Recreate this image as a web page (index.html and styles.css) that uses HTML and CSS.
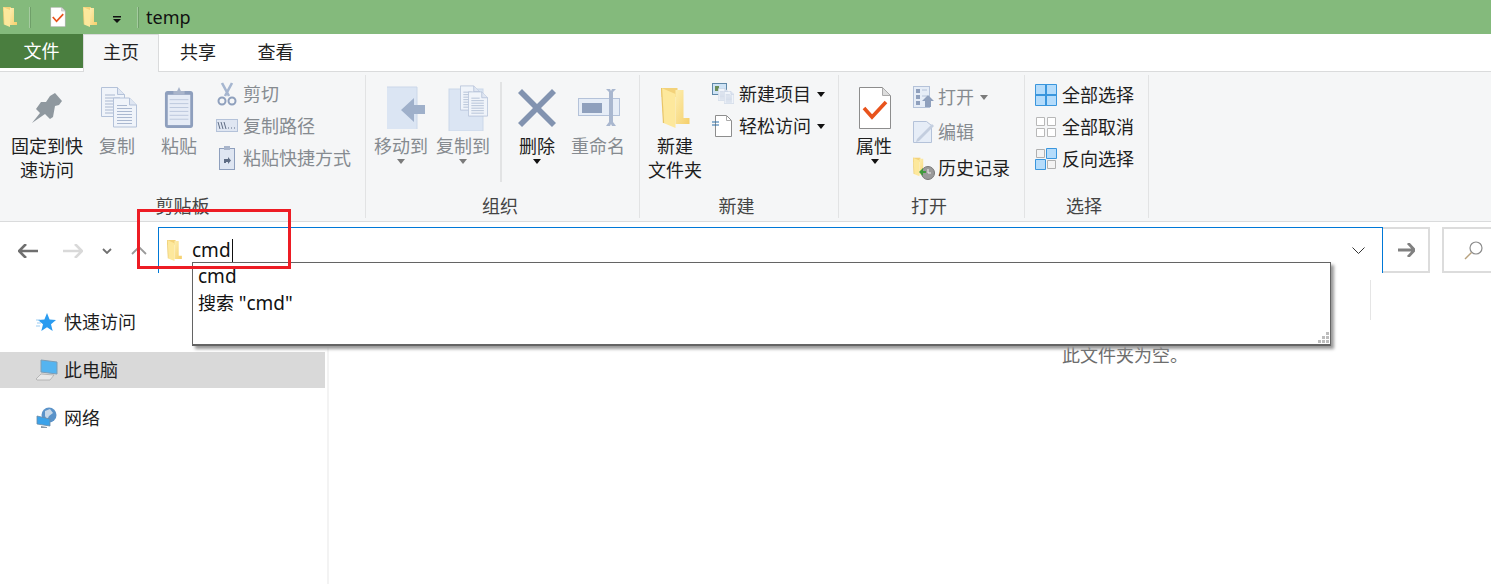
FILE: index.html
```html
<!DOCTYPE html>
<html lang="zh-CN">
<head>
<meta charset="utf-8">
<title>temp</title>
<link rel="stylesheet" href="styles.css">
</head>
<body>
<svg class="defs" width="0" height="0" aria-hidden="true">
  <defs>
    <linearGradient id="fold" x1="0" y1="0" x2="1" y2="1">
      <stop offset="0" stop-color="#fdeeb0"/><stop offset="1" stop-color="#f5cf6b"/>
    </linearGradient>
    <symbol id="folder" viewBox="0 0 14 20">
      <path d="M0 0h8v4.500h-8z" fill="#f3d27a"/>
      <path d="M7 1h4v14h3v3H7z" fill="url(#fold)"/>
      <path d="M0 0l7 3v17l-6-2.500z" fill="#fde89c"/>
      <path d="M0 0l1 17.500" stroke="#e8c568" stroke-width=".6"/>
    </symbol>
    <symbol id="checkdoc" viewBox="0 0 32 42">
      <path d="M.5.500h23l8 8v33H.500z" fill="#fff" stroke="#8d8d8d"/>
      <path d="M23.500.500v8h8z" fill="#ddd" stroke="#aaa"/>
      <path d="M5 21l8 9L27 15" fill="none" stroke="#e8531c" stroke-width="3.600"/>
    </symbol>
    <symbol id="page" viewBox="0 0 24 30">
      <path d="M.5.500h16l7 7v22H.5z" fill="#f0f4fa" stroke="#b4c2d9"/>
      <path d="M16.500.500v7h7" fill="#dfe6f2" stroke="#b4c2d9"/>
      <path d="M4 8h10M4 11h15M4 14h15M4 17h15M4 20h15M4 23h15M4 26h15" stroke="#aab8d0"/>
    </symbol>
  </defs>
</svg>

<div class="app">
  <header class="title">
    <svg class="t-folder1"><use href="#folder"/></svg>
    <i class="t-sep t-sep1"></i>
    <svg class="t-check"><use href="#checkdoc"/></svg>
    <svg class="t-folder2"><use href="#folder"/></svg>
    <svg class="t-caret" viewBox="0 0 10 8"><path d="M1 0h8v1.500H1z M1 3h8L5 7z" fill="#111"/></svg>
    <i class="t-sep t-sep2"></i>
    <span class="t-name">temp</span>
  </header>

  <nav class="tabs">
    <span class="tab tab-file">文件</span>
    <span class="tab tab-on">主页</span>
    <span class="tab tab-share">共享</span>
    <span class="tab tab-view">查看</span>
  </nav>

  <section class="ribbon">
    <div class="group g-clip">
      <div class="g-body">
        <div class="big w-pin">
          <span class="ico">
            <svg width="30" height="30" viewBox="0 0 30 30"><path d="M18 3L23 0l7 8-3 4-4 1-2 11-3 2-5-5L0 30l8-10-4-4 5-7h5z" fill="#8f989f"/></svg>
          </span>
          <span class="lbl">固定到快<br>速访问</span>
        </div>
        <div class="big w-copy off">
          <span class="ico ico-r2">
            <svg width="36" height="43" viewBox="0 0 36 43"><use href="#page" x="0" y="0" width="24" height="32"/><use href="#page" x="12" y="10" width="24" height="33"/></svg>
          </span>
          <span class="lbl">复制</span>
        </div>
        <div class="big w-paste off">
          <span class="ico">
            <svg width="30" height="43" viewBox="0 0 32 44" preserveAspectRatio="none"><rect x="1" y="5" width="30" height="38" rx="3" fill="#8e9fbd"/><rect x="4" y="9" width="24" height="31" fill="#e6ecf6"/><path d="M6 14h20M6 18h20M6 22h20M6 26h20M6 30h20M6 34h20" stroke="#bcc8dc"/><path d="M10 9V5h4l2-4 2 4h4v4z" fill="#a9b5cb"/></svg>
          </span>
          <span class="lbl">粘贴</span>
        </div>
        <div class="smalls s-clip off">
          <div class="row">
            <svg class="s-ico" width="22" height="24" viewBox="0 0 22 24"><path d="M6 1l7 13M16 1L9 14" stroke="#a6b6d0" stroke-width="2.600" fill="none"/><circle cx="6" cy="19" r="3.500" fill="none" stroke="#8fa0bd" stroke-width="2"/><circle cx="16" cy="19" r="3.500" fill="none" stroke="#8fa0bd" stroke-width="2"/></svg>
            <span>剪切</span>
          </div>
          <div class="row">
            <svg class="s-ico" width="22" height="14" viewBox="0 0 22 14"><rect x=".5" y=".5" width="21" height="12" fill="#dfe6f2" stroke="#b4c2d9"/><path d="M2 3l2 7M5 3l2 7M8 3l2 7" stroke="#5f6d85"/><path d="M12 9h1M15 9h1M18 9h1" stroke="#5f6d85"/></svg>
            <span>复制路径</span>
          </div>
          <div class="row">
            <svg class="s-ico s-narrow" width="16" height="24" viewBox="0 0 16 24"><rect x=".5" y="2.500" width="15" height="21" fill="#dfe6f2" stroke="#8e9fbd"/><rect x="5" y="0" width="6" height="4" fill="#a9b5cb"/><path d="M5 17v-4h4v-2l3 3.500-3 3.500v-2H7v1z" fill="#5f6d85"/></svg>
            <span>粘贴快捷方式</span>
          </div>
        </div>
      </div>
      <div class="g-name">剪贴板</div>
    </div>

    <div class="group g-org">
      <div class="g-body">
        <div class="big w-move off">
          <span class="ico ico-r8">
            <svg width="40" height="44" viewBox="0 0 40 44"><rect x="1" y="1" width="30" height="42" fill="#dbe5f3"/><path d="M1 1h30v42" fill="none" stroke="#cbd7e9"/><path d="M28 19v-7L15 24l13 12v-8h11v-9z" fill="#9fb0ca"/></svg>
          </span>
          <span class="lbl">移动到</span>
          <i class="caret gray"></i>
        </div>
        <div class="big w-move off">
          <span class="ico ico-r8">
            <svg width="40" height="46" viewBox="0 0 40 46"><rect x="1" y="4" width="34" height="42" fill="#dbe5f3" stroke="#cbd7e9"/><use href="#page" x="12" y="0" width="20" height="26"/><use href="#page" x="20" y="6" width="20" height="26"/></svg>
          </span>
          <span class="lbl">复制到</span>
          <i class="caret gray"></i>
        </div>
        <i class="divider"></i>
        <div class="big w-del">
          <span class="ico">
            <svg width="38" height="38" viewBox="0 0 38 38"><path d="M4 0l15 15L34 0l4 4-15 15 15 15-4 4-15-15L4 38l-4-4 15-15L0 4z" fill="#8293b0"/></svg>
          </span>
          <span class="lbl">删除</span>
          <i class="caret"></i>
        </div>
        <div class="big w-ren off">
          <span class="ico ico-r2">
            <svg width="44" height="40" viewBox="0 0 44 40"><rect x=".5" y="10.500" width="41" height="17" fill="#e6edf7" stroke="#b4c2d9"/><rect x="4" y="15" width="20" height="10" fill="#8fa0bd"/><path d="M28 1h4l1 2 1-2h4l-3 3v30l3 4h-4l-1-2-1 2h-4l3-4V4z" fill="#a9b7cf"/></svg>
          </span>
          <span class="lbl">重命名</span>
        </div>
      </div>
      <div class="g-name">组织</div>
    </div>

    <div class="group g-new">
      <div class="g-body">
        <div class="big w-newf">
          <span class="ico">
            <svg class="ico-folder"><use href="#folder"/></svg>
          </span>
          <span class="lbl">新建<br>文件夹</span>
        </div>
        <div class="smalls s-new">
          <div class="row">
            <svg class="s-ico" width="22" height="22" viewBox="0 0 22 22"><rect x=".5" y=".5" width="14" height="11" fill="#cfe3f5" stroke="#5f88a8"/><rect x="3" y="3" width="4" height="5" fill="#6b8e5a"/><use href="#page" x="6" y="5" width="10" height="13"/><use href="#page" x="12" y="8" width="10" height="13"/></svg>
            <span>新建项目</span>
            <i class="caret dark"></i>
          </div>
          <div class="row">
            <svg class="s-ico" width="20" height="22" viewBox="0 0 20 22"><path d="M3.500.500h11l5 5v16h-16z" fill="#fff" stroke="#8d8d8d"/><path d="M14.500.500v5h5" fill="none" stroke="#aaa"/><path d="M0 7h7M0 10h7" stroke="#2b6ea8"/></svg>
            <span>轻松访问</span>
            <i class="caret dark"></i>
          </div>
        </div>
      </div>
      <div class="g-name">新建</div>
    </div>

    <div class="group g-open">
      <div class="g-body">
        <div class="big w-prop">
          <span class="ico">
            <svg width="32" height="42"><use href="#checkdoc"/></svg>
          </span>
          <span class="lbl">属性</span>
          <i class="caret"></i>
        </div>
        <div class="smalls s-open">
          <div class="row off">
            <svg class="s-ico" width="22" height="22" viewBox="0 0 22 22"><rect x=".5" y=".5" width="16" height="21" fill="#e6edf7" stroke="#b4c2d9"/><path d="M3 3h4v4H3zM3 9h4v4H3zM3 15h4v4H3z" fill="#8fa0bd"/><path d="M9 4h5M9 10h5" stroke="#b4c2d9"/><path d="M15 9l6 6h-3v6h-6v-6H9z" fill="#8fa0bd"/></svg>
            <span>打开</span>
            <i class="caret gray"></i>
          </div>
          <div class="row off">
            <svg class="s-ico" width="22" height="22" viewBox="0 0 22 22"><path d="M.5.500h13l5 4v17H.5z" fill="#e6edf7" stroke="#b4c2d9"/><path d="M4 18L19 3l2 2L6 20l-3 1z" fill="#c3cedf"/></svg>
            <span>编辑</span>
          </div>
          <div class="row">
            <svg class="s-ico" width="22" height="24" viewBox="0 0 22 24"><use href="#folder" x="0" y="0" width="13" height="22"/><circle cx="15" cy="17" r="6.500" fill="#9a9a9a" stroke="#777"/><path d="M15 13v4h3" stroke="#eee" fill="none"/><path d="M6 16l4-4v3h3v2h-3v3z" fill="#3f9a3f"/></svg>
            <span>历史记录</span>
          </div>
        </div>
      </div>
      <div class="g-name">打开</div>
    </div>

    <div class="group g-sel">
      <div class="g-body">
        <div class="smalls s-sel">
          <div class="row">
            <svg class="s-ico" width="22" height="22" viewBox="0 0 22 22"><path d="M.5.500h21v21H.5z" fill="#b5dcfb" stroke="#3a96dd"/><path d="M11 0v22M0 11h22" stroke="#3a96dd" stroke-width="2"/></svg>
            <span>全部选择</span>
          </div>
          <div class="row">
            <svg class="s-ico" width="22" height="22" viewBox="0 0 22 22"><path d="M1.500 1.500h8v8h-8zM12.500 1.500h8v8h-8zM1.500 12.500h8v8h-8zM12.500 12.500h8v8h-8z" fill="#fff" stroke="#b8b8b8"/></svg>
            <span>全部取消</span>
          </div>
          <div class="row">
            <svg class="s-ico" width="22" height="22" viewBox="0 0 22 22"><path d="M1.500 1.500h8v8h-8zM12.500 12.500h8v8h-8z" fill="#f3f3f3" stroke="#b0b0b0"/><path d="M11.500.500h10v10h-10zM.500 11.500h10v10H.5z" fill="#b5dcfb" stroke="#3a96dd"/></svg>
            <span>反向选择</span>
          </div>
        </div>
      </div>
      <div class="g-name">选择</div>
    </div>
  </section>

  <div class="addr">
    <svg class="nav n-back" width="20" height="14" viewBox="0 0 20 14"><path d="M8 0L1 7l7 7M1 7h19" fill="none" stroke="#6f6f6f" stroke-width="2.600"/></svg>
    <svg class="nav n-fwd" width="20" height="14" viewBox="0 0 20 14"><path d="M12 0l7 7-7 7M19 7H0" fill="none" stroke="#d9d9d9" stroke-width="2.600"/></svg>
    <svg class="nav n-down" width="10" height="6" viewBox="0 0 10 6"><path d="M1 1l4 4 4-4" fill="none" stroke="#6f6f6f" stroke-width="1.800"/></svg>
    <svg class="nav n-up" width="16" height="10" viewBox="0 0 16 10"><path d="M1 9l7-7 7 7" fill="none" stroke="#9a9a9a" stroke-width="1.800"/></svg>
    <div class="path">
      <svg class="p-folder"><use href="#folder"/></svg>
      <span class="p-text">cmd</span>
      <svg class="p-chev" width="13" height="7" viewBox="0 0 13 7"><path d="M.5.500l6 6 6-6" fill="none" stroke="#333"/></svg>
    </div>
    <div class="go">
      <svg width="17" height="14" viewBox="0 0 17 14"><path d="M10 0l6.500 7-6.500 7M16 7H0" fill="none" stroke="#808080" stroke-width="2.800"/></svg>
    </div>
    <div class="search">
      <svg width="20" height="20" viewBox="0 0 20 20"><circle cx="12" cy="8" r="6" fill="none" stroke="#8c8c8c" stroke-width="1.200"/><path d="M7.500 12.500L1 19" stroke="#b8a27e" stroke-width="1.400"/></svg>
    </div>
  </div>

  <div class="content">
    <aside class="side">
      <div class="item">
        <svg class="i-ico" width="22" height="20" viewBox="1 0 22 20"><path d="M12 1l2.600 6.500L21 8l-5 4.300 1.700 6.700L12 15.300 6.300 19 8 12.300 3 8l6.400-.5z" fill="#2b9cf0"/><path d="M1 8h4M2 11h4M1 14h4" stroke="#9ccdf2"/></svg>
        <span>快速访问</span>
      </div>
      <div class="item sel">
        <svg class="i-ico" width="22" height="22" viewBox="0 0 22 22"><path d="M5 1l16 2v12L5 13z" fill="#54b4f0" stroke="#7d9db5"/><path d="M0 20l5-5 13 1-4 5H1z" fill="#e8e8e8" stroke="#a5a5a5" stroke-width=".7"/></svg>
        <span>此电脑</span>
      </div>
      <div class="item">
        <svg class="i-ico" width="22" height="22" viewBox="0 0 22 22"><circle cx="13" cy="8" r="7.500" fill="#5b93c9"/><path d="M9 4l5-2 3 4-4 3-2 4-2-4z" fill="#c8d8e8"/><path d="M1 9l13 3v7L1 17z" fill="#3aa2ea" stroke="#6b8aa5" stroke-width=".8"/><path d="M5 19l6 1v1H5z" fill="#8a9aa8"/></svg>
        <span>网络</span>
      </div>
    </aside>
    <main class="main">
      <div class="col-head"></div>
      <p class="empty">此文件夹为空。</p>
    </main>
  </div>

  <div class="popup">
    <div class="pop-line pop-first"><span class="lat">cmd</span></div>
    <div class="pop-line">搜索 <span class="lat">"cmd"</span></div>
    <svg class="grip" width="11" height="11" viewBox="0 0 11 11"><path d="M8 0h3v3H8zM4 4h3v3H4zM8 4h3v3H8zM0 8h3v3H0zM4 8h3v3H4zM8 8h3v3H8z" fill="#bdbdbd"/></svg>
  </div>
  <div class="redbox"></div>
</div>
</body>
</html>
```

FILE: styles.css
```css
* { box-sizing: border-box; }
html, body { margin: 0; padding: 0; height: 100%; background: #fff; overflow: hidden; }
body { font: 18px/24px "Noto Sans", "Noto Sans CJK SC", sans-serif; color: #1e1e1e; }
.defs { display: block; height: 0; }
.app { position: relative; width: 1491px; height: 584px; overflow: hidden; }
i { display: block; }
svg { display: block; flex: none; }

/* title bar */
.title { height: 34px; background: #84ba7c; display: flex; align-items: center; }
.t-folder1 { width: 14px; height: 20px; margin-left: 3px; }
.t-sep { width: 2px; height: 21px; background: #a5cba0; border-right: 1px solid #6f9f69; }
.t-sep1 { margin-left: 12px; }
.t-check { width: 16px; height: 20px; margin-left: 19px; }
.t-folder2 { width: 14px; height: 20px; margin-left: 17px; }
.t-caret { width: 10px; height: 8px; margin: 5px 0 0 15px; }
.t-sep2 { margin-left: 15px; }
.t-name { margin-left: 7px; color: #111; }

/* tabs */
.tabs { height: 38px; display: flex; border-bottom: 1px solid #dadbdc; }
.tab { display: block; text-align: center; line-height: 36px; color: #222; }
.tab-file { width: 83px; height: 34px; line-height: 34px; background: #4a7e3f; color: #fff; }
.tab-on { width: 76px; height: 38px; background: #f5f6f7; border: 1px solid #dadbdc; border-width: 1px 1px 0; line-height: 35px; }
.tab-share { width: 78px; }
.tab-view { width: 77px; }

/* ribbon */
.ribbon { height: 150px; background: #f5f6f7; border-bottom: 1px solid #dadbdc; display: flex; padding-top: 3px; }
.group { display: flex; flex-direction: column; border-right: 1px solid #e2e3e4; height: 143px; flex: none; }
.g-body { flex: 1; display: flex; align-items: flex-start; }
.g-name { text-align: center; color: #444; height: 24px; line-height: 24px; padding-right: 5px; }
.g-clip { width: 366px; }
.g-clip .g-body { padding-left: 3px; }
.g-clip .g-name { padding-right: 0; }
.g-org { width: 274px; }
.g-org .g-body { padding-left: 6px; }
.g-new { width: 199px; }
.g-new .g-body { padding-left: 6px; }
.g-open { width: 186px; }
.g-open .g-body { padding-left: 8px; }
.g-sel { width: 124px; }
.g-sel .g-body { padding-left: 10px; }

.big { display: flex; flex-direction: column; align-items: center; flex: none; }
.ico { height: 59px; display: flex; align-items: center; justify-content: center; padding-top: 6px; }
.ico-r2 { padding-left: 3px; }
.ico-r8 { padding-left: 9px; }
.lbl { text-align: center; }
.off { color: #868b90; }
.w-pin { width: 88px; }
.w-copy { width: 52px; }
.w-paste { width: 72px; }
.w-move { width: 58px; margin-right: 4px; }
.w-del { width: 50px; margin-right: 4px; }
.w-ren { width: 64px; }
.w-newf { width: 58px; }
.w-prop { width: 56px; }
.w-prop .lbl { margin-right: 2px; }
.ico-folder { width: 29px; height: 40px; }
.divider { width: 2px; height: 100px; background: #e2e3e4; margin: 7px 10px 0 4px; flex: none; }

.caret { width: 0; height: 0; border: 4px solid transparent; border-top: 5px solid #111; border-bottom: 0; margin-top: 1px; }
.caret.gray { border-top-color: #7b7b7b; }
.caret.dark { margin: 0 0 0 6px; }
.row .caret.gray { margin-left: 6px; }

.smalls { display: flex; flex-direction: column; flex: none; }
.row { display: flex; align-items: center; height: 32px; white-space: nowrap; }
.s-ico { margin-right: 5px; }
.s-clip { margin-top: 3px; margin-left: 1px; }
.s-clip .s-narrow { margin: 0 8px 0 3px; }
.s-new { margin-left: 8px; margin-top: 3px; }
.s-new .row:last-child .s-ico { margin-right: 7px; }
.s-open { margin-left: 10px; margin-top: 4px; }
.s-open .row { height: 35.500px; }
.s-open .s-ico { margin-right: 3px; }
.s-sel { margin-top: 4px; }

/* address row */
.addr { height: 51px; display: flex; align-items: flex-start; padding-top: 5px; }
.n-back { margin: 17px 0 0 18px; }
.n-fwd { margin: 17px 0 0 25px; }
.n-down { margin: 21px 0 0 19px; }
.n-up { margin: 18px 0 0 19px; }
.path { flex: none; width: 1225px; height: 46px; margin-left: 11px; border: 1px solid #0078d7; border-bottom: 0; display: flex; align-items: center; }
.p-folder { width: 15px; height: 21px; margin-left: 8px; }
.p-text { margin-left: 10px; border-right: 1px solid #111; height: 23px; line-height: 23px; padding-right: 1px; color: #111; font-size: 19px; }
.p-chev { margin-left: auto; margin-right: 17px; }
.go { flex: none; width: 47px; height: 46px; border: 2px solid #dcdcdc; border-left: 0; display: flex; align-items: center; justify-content: center; padding-left: 2px; }
.search { flex: none; width: 60px; height: 46px; margin-left: 12px; border: 2px solid #dcdcdc; display: flex; align-items: center; padding-left: 20px; }

/* content */
.content { display: flex; height: 311px; }
.side { flex: none; width: 329px; border-right: 2px solid #f3f3f3; padding: 31px 2px 0 0; display: flex; flex-direction: column; gap: 12px; }
.item { height: 36px; display: flex; align-items: center; padding-left: 38px; }
.item span { margin-left: 4px; }
.item.sel { background: #d9d9d9; }
.item .i-ico { margin-left: -2px; margin-right: 2px; }
.main { flex: 1; padding-top: 7px; }
.col-head { width: 1042px; height: 40px; border-right: 1px solid #e5e5e5; }
.empty { margin: 23px 0 0 733px; color: #6d6d6d; }

/* overlays */
.popup { position: absolute; left: 192px; top: 262px; width: 1139px; height: 84px; background: #fff; border: 1px solid #646464; border-bottom-width: 2px; box-shadow: 3px 3px 3px #9a9a9a; padding: 0 5px; color: #111; }
.pop-line { height: 26px; line-height: 26px; }
.pop-first { height: 27px; }
.lat { font-size: 19px; }
.grip { position: absolute; right: 1px; bottom: 1px; }
.redbox { position: absolute; left: 137px; top: 209px; width: 154px; height: 60px; border: 3px solid #ed1c24; }
```
